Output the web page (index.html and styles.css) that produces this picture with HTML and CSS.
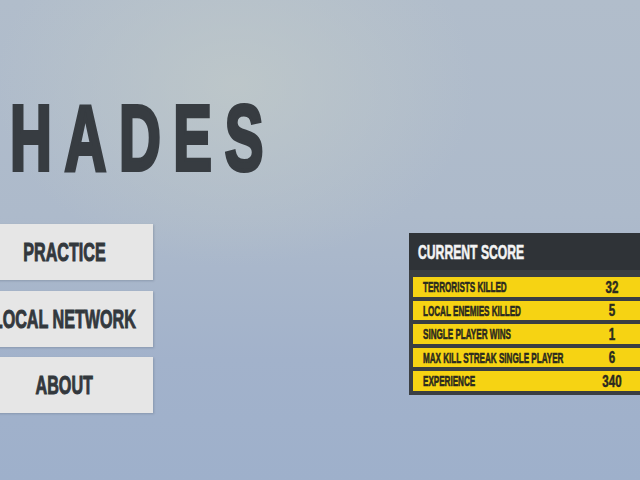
FILE: index.html
```html
<!DOCTYPE html>
<html lang="en">
<head>
    <meta charset="UTF-8">
    <title>Hades</title>
    <link rel="stylesheet" href="styles.css">
</head>
<body>
    <div class="screen">
        <h1 class="title"><span>HADES</span></h1>

        <div class="main-row">
            <div class="menu">
                <div class="menu-button"><span>PRACTICE</span></div>
                <div class="menu-button"><span>LOCAL NETWORK</span></div>
                <div class="menu-button"><span>ABOUT</span></div>
            </div>

            <div class="score-panel">
                <div class="score-header"><span>CURRENT SCORE</span></div>
                <div class="score-body">
                    <div class="score-row">
                        <span class="label">TERRORISTS KILLED</span>
                        <span class="value">32</span>
                    </div>
                    <div class="score-row">
                        <span class="label">LOCAL ENEMIES KILLED</span>
                        <span class="value">5</span>
                    </div>
                    <div class="score-row">
                        <span class="label">SINGLE PLAYER WINS</span>
                        <span class="value">1</span>
                    </div>
                    <div class="score-row">
                        <span class="label">MAX KILL STREAK SINGLE PLAYER</span>
                        <span class="value">6</span>
                    </div>
                    <div class="score-row">
                        <span class="label">EXPERIENCE</span>
                        <span class="value">340</span>
                    </div>
                </div>
            </div>
        </div>
    </div>
</body>
</html>
```

FILE: styles.css
```css
/* styles.css */

body {
    margin: 0;
    overflow: hidden;
    font-family: 'Liberation Sans', Arial, sans-serif;
    font-weight: bold;
}

.screen {
    width: 640px;
    height: 480px;
    overflow: hidden;
    padding-top: 89px;
    box-sizing: border-box;
    background:
        radial-gradient(ellipse 240px 180px at 235px 85px, rgba(192,201,201,0.8), rgba(192,201,201,0) 100%),
        linear-gradient(180deg, #b1bdcb 0%, #adbacb 45%, #a2b2cb 75%, #9eb0cb 100%);
}

.title {
    margin: 0 0 37px 10px;
    height: 98px;
    font-size: 92px;
    line-height: 98px;
    font-weight: bold;
    color: #373c41;
    white-space: nowrap;
}

.title span {
    display: inline-block;
    letter-spacing: 20px;
    -webkit-text-stroke: 4px #373c41;
    transform: scaleX(0.63);
    transform-origin: left center;
}

.main-row {
    display: flex;
    align-items: flex-start;
}

.menu {
    display: flex;
    flex-direction: column;
    gap: 10.5px;
    width: 177px;
    margin-left: -24px;
}

.menu-button {
    height: 56px;
    display: flex;
    justify-content: center;
    align-items: center;
    background-color: #e6e6e6;
    box-shadow: 1px 1px 2px rgba(60,70,90,0.25);
    color: #33383d;
    font-size: 26px;
    line-height: 26px;
    white-space: nowrap;
}

.menu-button span {
    display: inline-block;
    -webkit-text-stroke: 1px #33383d;
    transform: scaleX(0.62);
}

.score-panel {
    width: 250px;
    margin-top: 9px;
    margin-left: 256px;
    flex-shrink: 0;
    background-color: #3a3e42;
}

.score-header {
    height: 37px;
    box-sizing: border-box;
    padding: 7.5px 0 0 9px;
    background-color: #2f3337;
    color: #f4f4f4;
    font-size: 21px;
    line-height: 21px;
    white-space: nowrap;
}

.score-header span {
    display: inline-block;
    -webkit-text-stroke: 0.6px #f4f4f4;
    transform: scaleX(0.58);
    transform-origin: left center;
}

.score-body {
    display: flex;
    flex-direction: column;
    gap: 4px;
    padding: 7px 0 4.5px 4px;
}

.score-row {
    height: 19.5px;
    display: grid;
    grid-template-columns: 169px 40px;
    align-items: center;
    padding-left: 10px;
    background-color: #f6d313;
    color: #2b2a1f;
    white-space: nowrap;
}

.score-row .label {
    display: inline-block;
    font-size: 15px;
    line-height: 15px;
    -webkit-text-stroke: 0.6px #2b2a1f;
    transform: scaleX(0.54);
    transform-origin: left center;
}

.score-row .value {
    display: inline-block;
    text-align: center;
    font-size: 16.5px;
    line-height: 16.5px;
    -webkit-text-stroke: 0.5px #2b2a1f;
    transform: scaleX(0.7);
}
```
